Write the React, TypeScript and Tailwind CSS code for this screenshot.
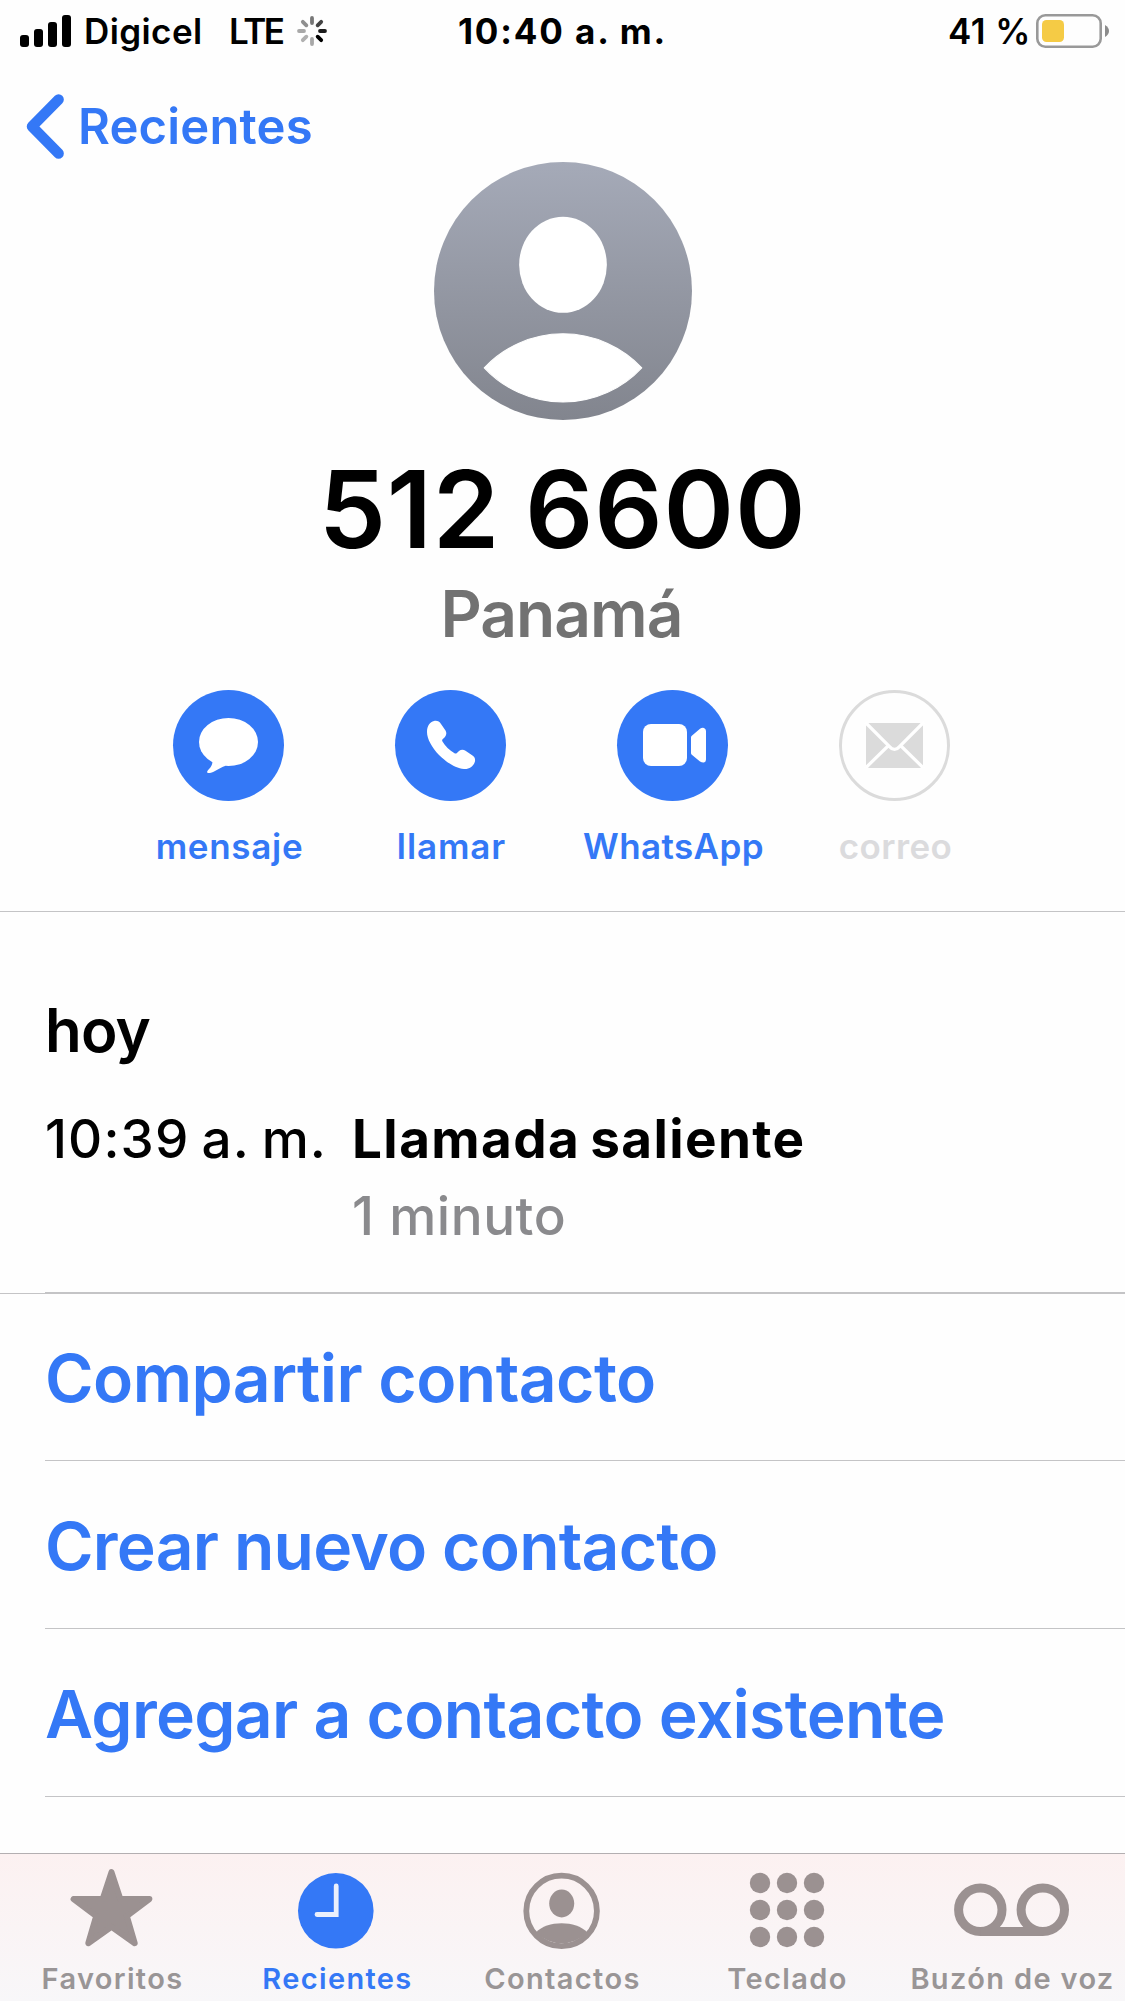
import type { ReactNode } from 'react';

const Signal = () => (
  <svg width="51" height="32" viewBox="0 0 51 32" fill="currentColor">
    <rect x="0" y="20" width="9" height="12" rx="3" />
    <rect x="14" y="14" width="9" height="18" rx="3" />
    <rect x="28" y="7" width="9" height="25" rx="3" />
    <rect x="42" y="0" width="9" height="32" rx="3" />
  </svg>
);

// clockwise from the top
const spokes = ['#777777', '#444444', '#1c1c1c', '#000000', '#a8a8a8', '#b0b0b0', '#a8a8a8', '#8f8f8f'];

const Spinner = () => (
  <svg width="30" height="30" viewBox="-15 -15 30 30" strokeWidth="3.8" strokeLinecap="round">
    {spokes.map((color, index) => (
      <line key={index} x1="0" y1="-8" x2="0" y2="-13" stroke={color} transform={`rotate(${index * 45})`} />
    ))}
  </svg>
);

const Battery = () => (
  <svg width="73" height="34" viewBox="0 0 73 34">
    <rect x="1.3" y="1.3" width="63.4" height="31.4" rx="8" fill="none" stroke="#999999" strokeWidth="2.6" />
    <rect x="6" y="6" width="22" height="22" rx="4.5" fill="#f5cb45" />
    <path d="M69 11 C71.7 12.6 73 14.6 73 17 C73 19.4 71.7 21.4 69 23 Z" fill="#8c8c8c" />
  </svg>
);

const Chevron = () => (
  <svg width="38" height="65" viewBox="0 0 38 65" fill="none" stroke="currentColor" strokeWidth="10.5" strokeLinecap="round" strokeLinejoin="round">
    <path d="M32.6 5.5 L6 32.5 L32.6 59.5" />
  </svg>
);

const Avatar = () => (
  <svg width="258" height="258" viewBox="0 0 257 257">
    <defs>
      <linearGradient id="avatar" x1="0" y1="0" x2="0" y2="1">
        <stop offset="0" stopColor="#a5aab8" />
        <stop offset="1" stopColor="#82858e" />
      </linearGradient>
    </defs>
    <circle cx="128.5" cy="128.5" r="128.5" fill="url(#avatar)" />
    <ellipse cx="128.5" cy="102.4" rx="43.7" ry="47.8" fill="white" />
    <path d="M50 205 A108 108 0 0 1 207 205 A107.5 107.5 0 0 1 50 205 Z" fill="white" stroke="white" strokeWidth="1" strokeLinejoin="round" />
  </svg>
);

const Message = () => (
  <svg className="size-[111px]" viewBox="0 0 111 111" fill="white">
    <ellipse cx="55.5" cy="52" rx="29.5" ry="24" />
    <path d="M39.5 69 C40 75.5 37 78 34.6 80.7 C33.3 82.5 34.6 83.3 37 82.9 C42 82 46.5 77.5 52 75.9 L56 70 Z" />
  </svg>
);

const Phone = () => (
  <svg className="size-[111px]" viewBox="0 0 111 111" fill="white">
    <path d="M39 31 C42 30.3 44.5 31.5 46 34 L50.5 40.5 C52 43 51.3 45.5 49.5 47.5 L47.6 49.3 C47 50 47 50.8 47.5 51.6 C50 56 54.5 60.5 59.5 63.3 C60.3 63.8 61.2 63.7 61.9 63.1 L64 61 C66 59.3 68.5 59.3 70.5 60.7 L77.5 65.5 C80 67.2 80.5 69.5 79.8 72 C78 77 74 79.3 69 79 C60 78.5 50 71 44 65 C37 57.5 32 49 32 42 C32 36 35 31.8 39 31 Z" />
  </svg>
);

const Video = () => (
  <svg className="size-[111px]" viewBox="0 0 111 111" fill="white">
    <rect x="26" y="34" width="44" height="42" rx="8" />
    <path d="M74 47.5 Q74 46.5 74.8 45.8 L83 38.8 Q85 37.3 87 37.9 Q89 38.6 89 41 V69.5 Q89 72 87 72.4 Q85 72.7 83 71.4 L74.8 64.8 Q74 64.2 74 63 Z" />
  </svg>
);

const Mail = () => (
  <svg className="size-[105px]" viewBox="3 3 105 105">
    <rect x="27" y="33" width="57" height="45" rx="3" fill="#dbdbdb" />
    <g fill="none" stroke="white" strokeWidth="3.2">
      <path d="M26 32 L50.5 56.6 Q55.5 62.3 60.5 56.6 L85 32" />
      <path d="M49 56 L26 78.5 M62 56 L85 78.5" />
    </g>
  </svg>
);

const Star = () => (
  <svg width="120" height="84" viewBox="0 0 120 84" fill="currentColor" stroke="currentColor" strokeWidth="6" strokeLinejoin="round">
    <path d="M59.5 4.2 L68.3 31 H97.4 L74.8 48 L82.7 75.2 L59.5 58.9 L36.3 75.2 L44.2 48 L21.6 31 H50.7 Z" />
  </svg>
);

const Clock = () => (
  <svg width="120" height="84" viewBox="0 0 120 84">
    <circle cx="58.8" cy="42.8" r="37.8" fill="currentColor" />
    <path d="M59.2 18 V46.5 H40" fill="none" stroke="#ebf0fc" strokeWidth="4.8" strokeLinecap="round" />
  </svg>
);

const Person = () => (
  <svg width="120" height="84" viewBox="0 0 120 84" fill="currentColor">
    <circle cx="59.6" cy="42.9" r="35.3" fill="none" stroke="currentColor" strokeWidth="5.8" />
    <ellipse cx="59.7" cy="35.5" rx="12.5" ry="13.9" />
    <path d="M34 64.5 C45 52.3 74 52.3 85.3 64.5 A36 36 0 0 1 34 64.5 Z" />
  </svg>
);

const Keypad = () => (
  <svg width="120" height="84" viewBox="0 0 120 84" fill="currentColor">
    {[15, 42, 69].map((cy) => [33, 60, 87].map((cx) => <circle key={cx + '-' + cy} cx={cx} cy={cy} r="10.2" />))}
  </svg>
);

const Voicemail = () => (
  <svg width="120" height="84" viewBox="0 0 120 84" fill="none" stroke="currentColor" strokeWidth="9">
    <circle cx="28.3" cy="41.8" r="21.7" />
    <circle cx="90.8" cy="41.8" r="21.7" />
    <path d="M28.3 63.5 H90.8" />
  </svg>
);

const actions: { name: string, icon: ReactNode, disabled?: boolean, tracking: string }[] = [
  { name: 'mensaje', icon: <Message />, tracking: 'tracking-[0.7px]' },
  { name: 'llamar', icon: <Phone />, tracking: 'tracking-[0.9px]' },
  { name: 'WhatsApp', icon: <Video />, tracking: 'tracking-[0.4px]' },
  { name: 'correo', icon: <Mail />, disabled: true, tracking: 'tracking-[0.4px]' },
];

const options: { name: string, style: string }[] = [
  { name: 'Compartir contacto', style: 'h-[167px] tracking-[-0.55px]' },
  { name: 'Crear nuevo contacto', style: 'h-[168px] tracking-[-0.8px]' },
  { name: 'Agregar a contacto existente', style: 'h-[168px] tracking-[-0.7px]' },
];

const tabs: { name: string, icon: ReactNode, active?: boolean }[] = [
  { name: 'Favoritos', icon: <Star /> },
  { name: 'Recientes', icon: <Clock />, active: true },
  { name: 'Contactos', icon: <Person /> },
  { name: 'Teclado', icon: <Keypad /> },
  { name: 'Buzón de voz', icon: <Voicemail /> },
];

const StatusBar = () => (
  <div className="grid h-[62px] grid-cols-3 items-center text-[35px] font-semibold whitespace-nowrap">
    <div className="flex items-center pl-5">
      <Signal />
      <span className="ml-[13px] w-[145px] tracking-[0.4px]">Digicel</span>
      <span className="w-[68px] tracking-[-2.4px]">LTE</span>
      <Spinner />
    </div>
    <span className="text-center font-bold tracking-[1.85px]">10:40 a. m.</span>
    <div className="flex items-center justify-end gap-[5px] pr-4">
      <span className="tracking-[0.5px]">41 %</span>
      <Battery />
    </div>
  </div>
);

const App = () => {
  return (
    <div className="flex h-[2001px] w-[1125px] flex-col overflow-hidden bg-[#fefefe] font-['Inter','Liberation_Sans',sans-serif] text-black">
      <StatusBar />
      <nav className="pt-7">
        <a className="flex h-[72px] items-center gap-[14px] pl-[26px] text-[49px] font-semibold tracking-[0.15px] text-[#3478f6]">
          <Chevron />
          <span className="pt-[2px]">Recientes</span>
        </a>
      </nav>

      <header className="flex flex-col items-center border-b border-[#c4c4c6] pb-[43px]">
        <Avatar />
        <h1 className="mt-[35px] text-[107px] leading-[108px] font-semibold tracking-[0.8px] [word-spacing:-3px]">512 6600</h1>
        <p className="mt-[15px] mr-[2px] text-[64px] leading-[72px] font-semibold tracking-[-0.95px] text-[#727272]">Panamá</p>
        <ul className="mt-10 mr-[2px] grid w-[888px] grid-cols-4">
          {actions.map(({ name, icon, disabled, tracking }) => (
            <li key={name} className={`flex flex-col items-center ${disabled ? 'text-[#dbdbdd]' : 'text-[#3478f6]'}`}>
              <span className={`flex size-[111px] items-center justify-center rounded-full ${disabled ? 'border-3 border-[#dbdbdb]' : 'bg-[#3478f6]'}`}>
                {icon}
              </span>
              <span className={`mt-[23px] ml-[2px] text-[35px] leading-[44px] font-semibold ${tracking}`}>{name}</span>
            </li>
          ))}
        </ul>
      </header>

      <section className="pl-[45px]">
        <h2 className="mt-[82px] text-[60px] leading-[72px] font-semibold tracking-[-0.8px]">hoy</h2>
        <div className="mt-[35px] flex border-b border-[#c4c4c6] pb-[37px] text-[53px] leading-[77px]">
          <span className="w-[307px] font-medium tracking-[1.1px] [word-spacing:-3px]">10:39 a. m.</span>
          <div>
            <p className="h-[77px] font-bold tracking-[1.4px] [word-spacing:-4px]">Llamada saliente</p>
            <p className="h-[77px] font-medium tracking-[0.55px] text-[#8a8a8d]">1 minuto</p>
          </div>
        </div>
      </section>

      <ul className="flex-1 border-t border-[#c4c4c6] pl-[45px] text-[66px] font-semibold text-[#3478f6]">
        {options.map(({ name, style }) => (
          <li key={name} className={`border-b border-[#c4c4c6] ${style} flex items-center pt-[3px] whitespace-nowrap`}>{name}</li>
        ))}
      </ul>

      <footer className="grid h-[148px] grid-cols-5 border-t border-[#b3afb1] bg-linear-to-b from-[#fcf1f1] to-[#f8f7f9] pt-[14px]">
        {tabs.map(({ name, icon, active }) => (
          <a key={name} className={`flex flex-col items-center ${active ? 'text-[#3478f6]' : 'text-[#9b9191]'}`}>
            <span className="mr-px">{icon}</span>
            <span className={`mt-[10px] text-[29px] leading-[34px] font-semibold tracking-[1.35px] whitespace-nowrap ${active ? '' : 'text-[#999596]'}`}>{name}</span>
          </a>
        ))}
      </footer>
    </div>
  );
};

export default App;
